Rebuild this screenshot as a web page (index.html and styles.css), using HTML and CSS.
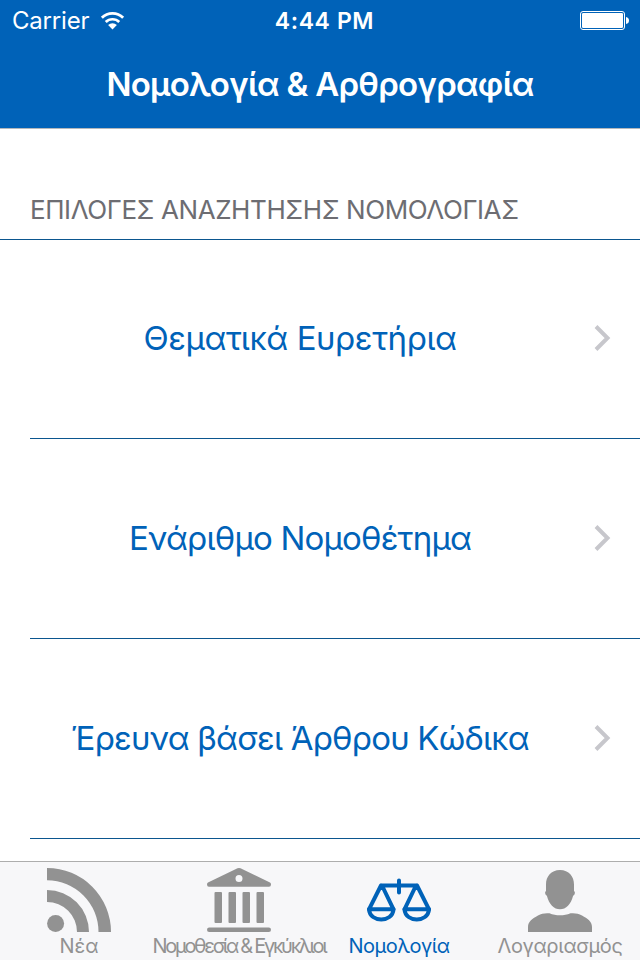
FILE: index.html
```
<!DOCTYPE html>
<html lang="el">
<head>
<meta charset="utf-8">
<title>Νομολογία &amp; Αρθρογραφία</title>
<link rel="stylesheet" href="styles.css">
</head>
<body>

<div class="header">
    <div class="status">
        <div class="carrier">
            <span>Carrier</span>
            <svg class="wifi" width="25" height="19" viewBox="0 0 26 20">
                <path d="M1.800 7.200a15.800 15.800 0 0 1 22.400 0" fill="none" stroke="#fff" stroke-width="3"/>
                <path d="M5.900 11.600a10 10 0 0 1 14.200 0" fill="none" stroke="#fff" stroke-width="2.800"/>
                <path d="M13 19.500l-4.600-4.700a6.500 6.500 0 0 1 9.200 0z" fill="#fff"/>
            </svg>
        </div>
        <div class="clock">4:44 PM</div>
        <svg class="battery" width="49" height="19" viewBox="0 0 49 19">
            <rect x=".5" y=".5" width="44" height="18" rx="2.5" fill="none" stroke="#fff"/>
            <rect x="2" y="2" width="41" height="15" rx="1.2" fill="#fff"/>
            <path d="M46 6q3 .5 3 3.500t-3 3.500z" fill="#fff"/>
        </svg>
    </div>
    <h1>Νομολογία &amp; Αρθρογραφία</h1>
</div>

<div class="section">ΕΠΙΛΟΓΕΣ ΑΝΑΖΗΤΗΣΗΣ ΝΟΜΟΛΟΓΙΑΣ</div>

<div class="list">
    <div class="row">
        <p>Θεματικά Ευρετήρια</p>
        <svg class="arrow" width="18" height="28" viewBox="0 0 18 28"><path d="M2 2.500L13.500 14 2 25.500" fill="none" stroke="#c7c7cc" stroke-width="4"/></svg>
    </div>
    <div class="row">
        <p>Ενάριθμο Νομοθέτημα</p>
        <svg class="arrow" width="18" height="28" viewBox="0 0 18 28"><path d="M2 2.500L13.500 14 2 25.500" fill="none" stroke="#c7c7cc" stroke-width="4"/></svg>
    </div>
    <div class="row">
        <p>Έρευνα βάσει Άρθρου Κώδικα</p>
        <svg class="arrow" width="18" height="28" viewBox="0 0 18 28"><path d="M2 2.500L13.500 14 2 25.500" fill="none" stroke="#c7c7cc" stroke-width="4"/></svg>
    </div>
</div>

<div class="tabs">
    <div class="tab news">
        <svg width="64" height="64" viewBox="0 0 64 64">
            <circle cx="8.600" cy="55.400" r="8.500"/>
            <path d="M0 0a64 64 0 0 1 64 64H51.500A51.500 51.500 0 0 0 0 12.300z"/>
            <path d="M0 22a42 42 0 0 1 42 42H30A30 30 0 0 0 0 34z"/>
        </svg>
        <span>Νέα</span>
    </div>
    <div class="tab laws">
        <svg width="64" height="64" viewBox="0 0 64 64">
            <path fill-rule="evenodd" d="M30.500.3q1.500-.6 3 0L63 14.500q1 .7 1 2 0 2.300-2 2.300H2q-2 0-2-2.300 0-1.300 1-2zM32 7a3.500 3.500 0 1 0 0 7 3.500 3.500 0 0 0 0-7z"/>
            <rect x="7.500" y="24" width="7.500" height="31" rx="1"/>
            <rect x="21.500" y="24" width="7.500" height="31" rx="1"/>
            <rect x="35.500" y="24" width="7.500" height="31" rx="1"/>
            <rect x="49.500" y="24" width="7.500" height="31" rx="1"/>
            <rect x="0" y="59.500" width="64" height="4.500" rx="2.200"/>
        </svg>
        <span>Νομοθεσία &amp; Εγκύκλιοι</span>
    </div>
    <div class="tab cases active">
        <svg width="64" height="64" viewBox="0 0 64 64">
            <g fill="none" stroke="#0062b8" stroke-width="4" stroke-linecap="round" stroke-linejoin="round">
                <path d="M32 12.500v12M14 17.500h36M14 17.500L2 41.300h24.500L15 17.500M50 17.500l12 23.800H37.500L49 17.500"/>
                <path d="M2 41.300c1 13.700 23.500 13.700 24.500 0M37.500 41.300c1 13.700 23.500 13.700 24.500 0"/>
            </g>
        </svg>
        <span>Νομολογία</span>
    </div>
    <div class="tab account">
        <svg width="64" height="64" viewBox="0 0 64 64">
            <path d="M32 2c9 0 14 6.500 14 14.500v6.500q1.300.5.800 2.500-.4 1.800-1.700 2.200C43 36 38 41.300 32 41.300S21 36 18.900 27.700q-1.300-.4-1.700-2.200-.5-2 .8-2.500v-6.500C18 8.500 23 2 32 2z"/>
            <path d="M0 64v-5c0-5.500 4.500-8.500 10-11.500 3.500-1.800 7-2.700 11.500-2.200 6.500 2.700 14.500 2.700 21 0 4.500-.5 8 .4 11.500 2.200 5.500 3 10 6 10 11.500v5z"/>
        </svg>
        <span>Λογαριασμός</span>
    </div>
</div>

</body>
</html>
```
FILE: styles.css
```
body {
  margin: 0;
  height: 960px;
  overflow: hidden;
  display: flex;
  flex-direction: column;
  background: #fff;
  font-family: Inter, "Noto Sans", sans-serif;
}
.header {
  height: 128px;
  flex: none;
  background: #0062b8;
  border-bottom: 1px solid #b2b7bc;
  color: #fff;
}
.status {
  display: grid;
  grid-template-columns: 1fr auto 1fr;
  align-items: center;
  height: 41px;
  padding: 0 11px 0 12px;
  font-size: 24px;
}
.carrier {
  display: flex;
  align-items: center;
  gap: 11px;
  letter-spacing: -0.2px;
}
.clock {
  padding-left: 8px;
  font-weight: 600;
  font-size: 23px;
  letter-spacing: 0.6px;
}
.battery {
  justify-self: end;
}
h1 {
  margin: 0;
  height: 87px;
  line-height: 87px;
  text-align: center;
  font-size: 33px;
  font-weight: 600;
  letter-spacing: -0.72px;
}
.section {
  box-sizing: border-box;
  height: 111px;
  flex: none;
  padding: 65px 30px 0;
  border-bottom: 1px solid #0b568f;
  color: #6d6d72;
  font-size: 26px;
  letter-spacing: -0.42px;
  line-height: 32px;
  white-space: nowrap;
}
.list {
  flex: 1;
  min-height: 0;
  padding-left: 30px;
}
.row {
  box-sizing: border-box;
  height: 200px;
  display: flex;
  align-items: center;
  padding-bottom: 2px;
  border-bottom: 1px solid #0b568f;
}
.row:first-child {
  height: 199px;
}
.row p {
  flex: none;
  width: 540px;
  margin: 0;
  color: #0062b8;
  font-size: 33px;
  letter-spacing: -0.8px;
  text-align: center;
  white-space: nowrap;
}
.row:first-child p {
  letter-spacing: -0.45px;
}
.arrow {
  margin-left: 24px;
}
.tabs {
  box-sizing: border-box;
  height: 99px;
  flex: none;
  display: grid;
  grid-template-columns: repeat(4, 160px);
  border-top: 1px solid #adadad;
  background: #f7f7f9;
  color: #929292;
}
.tab {
  display: flex;
  flex-direction: column;
  align-items: center;
  padding-top: 6px;
  font-size: 20px;
  line-height: 28px;
  white-space: nowrap;
}
.tab svg {
  fill: #929292;
}
.news, .laws, .cases {
  padding-right: 2px;
}
.laws span {
  letter-spacing: -2.3px;
}
.cases span {
  letter-spacing: -0.5px;
}
.account span {
  letter-spacing: -0.35px;
}
.tab.active {
  color: #0062b8;
}
```
